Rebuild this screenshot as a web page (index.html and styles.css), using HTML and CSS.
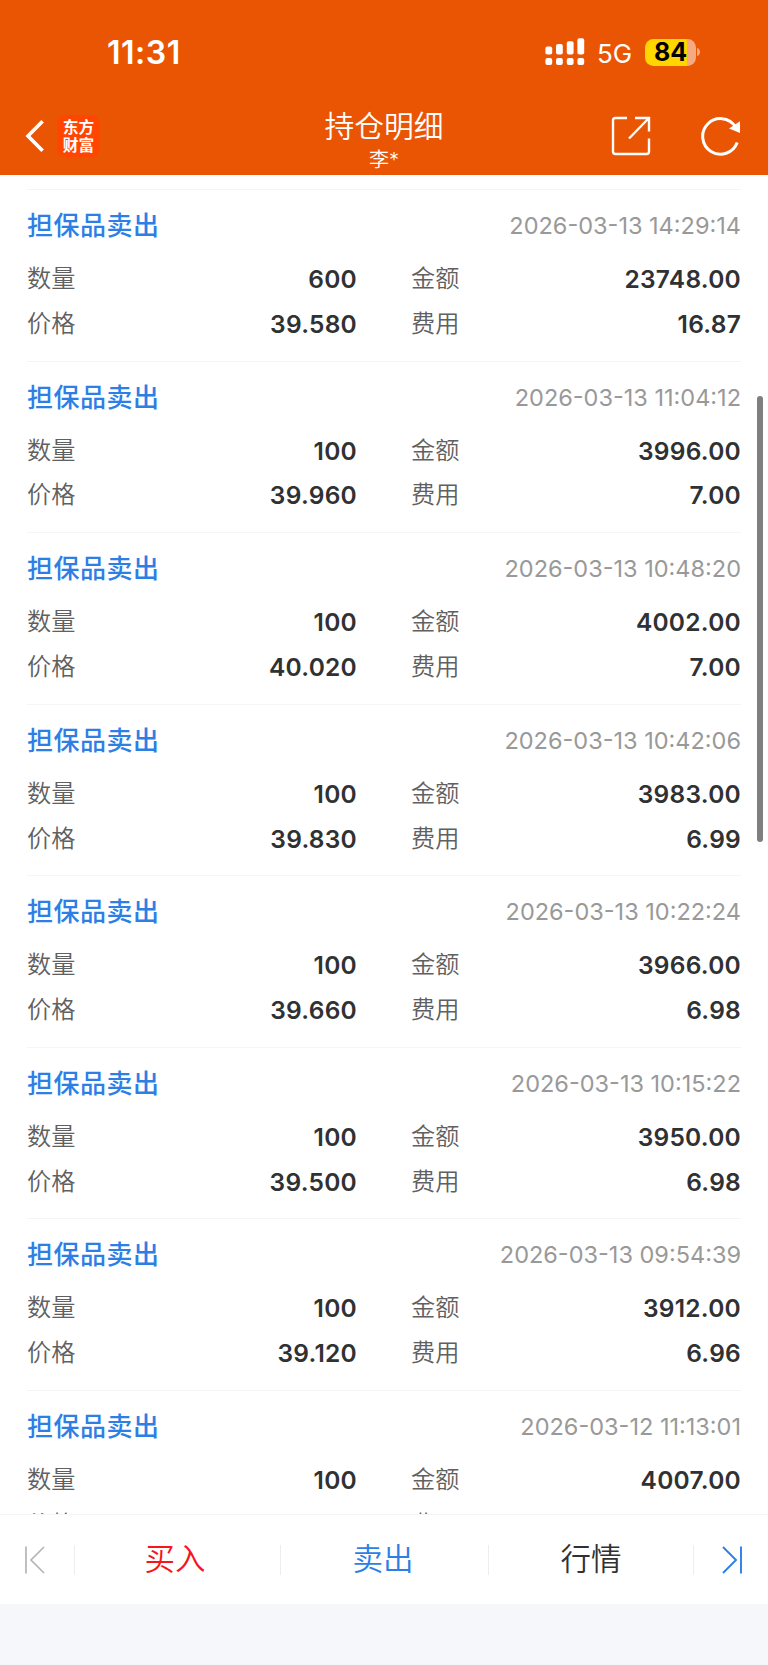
FILE: index.html
```
<!DOCTYPE html>
<html lang="zh-CN">
<head>
<meta charset="utf-8">
<title>持仓明细</title>
<link rel="stylesheet" href="styles.css">
</head>
<body>
<div class="app">
<header class="header">
  <div class="status">
    <span class="clock">11:31</span>
    <div class="status-right">
      <svg class="signal" width="40" height="28" viewBox="0 0 40 28" fill="#fff"><rect x="0.4" y="8.6" width="6.8" height="7.8" rx="2"/><rect x="11" y="6" width="6.8" height="10.4" rx="2"/><rect x="21.8" y="3.2" width="6.8" height="13.2" rx="2"/><rect x="32.4" y="0.2" width="6.8" height="16.2" rx="2"/><rect x="0.4" y="20" width="6.8" height="7" rx="2"/><rect x="11" y="20" width="6.8" height="7" rx="2"/><rect x="21.8" y="20" width="6.8" height="7" rx="2"/><rect x="32.4" y="20" width="6.8" height="7" rx="2"/></svg>
      <span class="network">5G</span>
      <div class="battery"><span class="battery-body">84</span><svg width="5" height="10" viewBox="0 0 5 10"><path d="M1 1C5 2 5 8 1 9Z" fill="#f5aa81"/></svg></div>
    </div>
  </div>
  <nav class="nav">
    <div class="nav-left">
      <svg width="20" height="34" viewBox="0 0 20 34" fill="none" stroke="#fff" stroke-width="3.6"><path d="M17.6 2.200 3 17 17.600 31.800"/></svg>
      <div class="logo">东方<br>财富</div>
    </div>
    <div class="nav-title"><h1>持仓明细</h1><p>李*</p></div>
    <div class="nav-right">
      <svg width="40" height="40" viewBox="0 0 40 40" fill="none" stroke="#fff" stroke-width="2.4"><path d="M16 2H4.5Q2 2 2 4.5V35.500Q2 38 4.500 38H35.500Q38 38 38 35.500V22.500M24 2H38V15.500M38 2 18 22.500"/></svg>
      <svg width="42" height="42" viewBox="0 0 42 42"><path d="M37.200 27.500A17.800 17.800 0 1 1 35.300 11.500" fill="none" stroke="#fff" stroke-width="3"/><path d="M40 6.300V18L29 13.500Z" fill="#fff"/></svg>
    </div>
  </nav>
</header>
<main class="list">
  <article class="deal"><div class="deal-head"><h2>担保品卖出</h2><time>2026-03-13 14:29:14</time></div><dl><dt>数量</dt><dd>600</dd><dt>金额</dt><dd>23748.00</dd><dt>价格</dt><dd>39.580</dd><dt>费用</dt><dd>16.87</dd></dl></article>
  <article class="deal"><div class="deal-head"><h2>担保品卖出</h2><time>2026-03-13 11:04:12</time></div><dl><dt>数量</dt><dd>100</dd><dt>金额</dt><dd>3996.00</dd><dt>价格</dt><dd>39.960</dd><dt>费用</dt><dd>7.00</dd></dl></article>
  <article class="deal"><div class="deal-head"><h2>担保品卖出</h2><time>2026-03-13 10:48:20</time></div><dl><dt>数量</dt><dd>100</dd><dt>金额</dt><dd>4002.00</dd><dt>价格</dt><dd>40.020</dd><dt>费用</dt><dd>7.00</dd></dl></article>
  <article class="deal"><div class="deal-head"><h2>担保品卖出</h2><time>2026-03-13 10:42:06</time></div><dl><dt>数量</dt><dd>100</dd><dt>金额</dt><dd>3983.00</dd><dt>价格</dt><dd>39.830</dd><dt>费用</dt><dd>6.99</dd></dl></article>
  <article class="deal"><div class="deal-head"><h2>担保品卖出</h2><time>2026-03-13 10:22:24</time></div><dl><dt>数量</dt><dd>100</dd><dt>金额</dt><dd>3966.00</dd><dt>价格</dt><dd>39.660</dd><dt>费用</dt><dd>6.98</dd></dl></article>
  <article class="deal"><div class="deal-head"><h2>担保品卖出</h2><time>2026-03-13 10:15:22</time></div><dl><dt>数量</dt><dd>100</dd><dt>金额</dt><dd>3950.00</dd><dt>价格</dt><dd>39.500</dd><dt>费用</dt><dd>6.98</dd></dl></article>
  <article class="deal"><div class="deal-head"><h2>担保品卖出</h2><time>2026-03-13 09:54:39</time></div><dl><dt>数量</dt><dd>100</dd><dt>金额</dt><dd>3912.00</dd><dt>价格</dt><dd>39.120</dd><dt>费用</dt><dd>6.96</dd></dl></article>
  <article class="deal"><div class="deal-head"><h2>担保品卖出</h2><time>2026-03-12 11:13:01</time></div><dl><dt>数量</dt><dd>100</dd><dt>金额</dt><dd>4007.00</dd><dt>价格</dt><dd></dd><dt>费用</dt><dd></dd></dl></article>
  <div class="scrollbar"></div>
</main>
<footer class="footer">
  <span class="step"><svg width="22" height="30" viewBox="0 0 22 30" fill="none" stroke="#b5b5b5" stroke-width="1.700"><path d="M2 1.500V28.500M20 2 7 15 20 28"/></svg></span>
  <a class="action buy"><span>买入</span></a>
  <a class="action sell"><span>卖出</span></a>
  <a class="action quote"><span>行情</span></a>
  <span class="step"><svg width="22" height="30" viewBox="0 0 22 30" fill="none" stroke="#2d7fe6" stroke-width="1.900"><path d="M20 1.500V28.500M2 2 15 15 2 28"/></svg></span>
</footer>
</div>
</body>
</html>
```
FILE: styles.css
```
* { box-sizing: border-box; margin: 0; padding: 0; }
body { background: #f6f7fa; font-family: Inter, "Noto Sans CJK SC", sans-serif; color: #303133; }
svg { display: block; flex: none; }
.app { width: 768px; height: 1665px; display: flex; flex-direction: column; overflow: hidden; }

.header { height: 174.5px; flex: none; background: #ea5504; color: #fff; }
.status { height: 97px; padding: 7px 67px 0 107px; display: flex; justify-content: space-between; align-items: center; }
.clock { font-size: 32px; font-weight: 600; letter-spacing: 0.500px; line-height: 38px; padding-top: 1px; }
.status-right { display: flex; align-items: center; }
.network { margin-left: 12px; font-size: 26px; line-height: 28px; width: 36px; padding-top: 3px; }
.battery { display: flex; align-items: center; margin-left: 12px; }
.battery-body { width: 51px; height: 27px; border-radius: 8.500px; background: linear-gradient(90deg, #ffd600 42px, #f5aa81 42px); color: #000; font-size: 25px; font-weight: 700; line-height: 27px; text-align: center; }
.nav { height: 76px; display: grid; grid-template-columns: 1fr auto 1fr; }
.nav-left { display: flex; align-items: center; gap: 12px; padding: 0 0 0 25px; }
.logo { width: 43px; height: 42px; padding-top: 3px; border-radius: 9px; background: #ff4500; text-align: center; font: 700 15.700px/18px "Noto Sans CJK SC", sans-serif; }
.nav-title { text-align: center; padding-top: 10px; }
.nav-title h1 { font-size: 29.800px; font-weight: 350; line-height: 38px; }
.nav-title p { font-size: 20px; line-height: 30px; font-weight: 350; }
.nav-right { display: flex; justify-content: flex-end; align-items: center; gap: 49px; padding-right: 26px; }

.list { height: 1339.500px; flex: none; background: #fff; padding: 14.500px 27px 0; overflow: hidden; position: relative; }
.deal { height: 171.550px; border-top: 1px solid #f5f5f5; padding-top: 9.200px; }
.deal-head { height: 58px; display: flex; justify-content: space-between; line-height: 54px; }
.deal h2 { font-size: 26px; font-weight: 500; letter-spacing: 0.500px; color: #2d7fe6; }
.deal time { font-size: 23.500px; color: #999; line-height: 53px; }
.deal dl { display: grid; grid-template-columns: 60px 270px 54px 1fr; grid-auto-rows: 44.750px; line-height: 44px; font-size: 24.200px; }
.deal dt { color: #606060; font-weight: 350; white-space: nowrap; }
.deal dt:nth-of-type(even) { margin-left: 54px; width: 60px; }
.deal dd { font-size: 24.500px; letter-spacing: 0.250px; font-weight: 600; text-align: right; }
.scrollbar { position: absolute; right: 5.500px; top: 221.500px; width: 5.500px; height: 446px; border-radius: 3px; background: #7f7f7f; }

.footer { height: 90px; flex: none; display: grid; grid-template-columns: 74px 206px 208px 206px 74px; align-items: center; background: #fff; border-top: 1px solid #f5f5f5; }
.step { display: flex; justify-content: center; }
.step:first-child { padding-right: 4px; }
.step:last-child { padding-left: 2px; }
.action { height: 30px; display: flex; align-items: center; justify-content: center; font-size: 30.500px; font-weight: 350; border-left: 1px solid #ededed; }
.action span { padding: 0 3px 5px 0; }
.buy span { padding-right: 5px; }
.quote { border-right: 1px solid #ededed; }
.quote span { padding-right: 0; }
.buy { color: #f5161d; }
.sell { color: #2d7fe6; }
```
